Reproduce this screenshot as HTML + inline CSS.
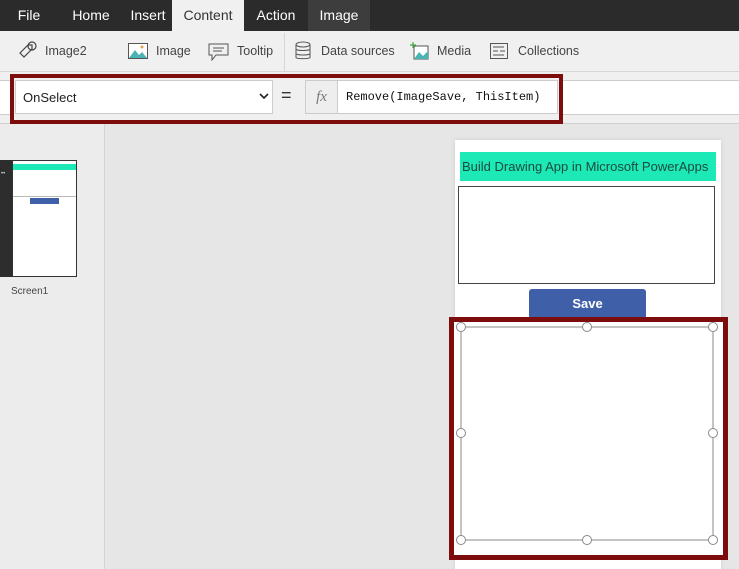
<!DOCTYPE html>
<html><head><meta charset="utf-8"><style>
*{margin:0;padding:0;box-sizing:border-box}
body{width:739px;height:569px;overflow:hidden;background:#e6e6e6;font-family:"Liberation Sans","DejaVu Sans",sans-serif;position:relative}
.abs{position:absolute}
.tab{position:absolute;top:0;height:31px;line-height:31px;font-size:14px;color:#fff;text-align:center}
.rb{position:absolute;top:44px;font-size:12.5px;color:#444}
</style></head><body>
<div class="abs" style="left:0;top:0;width:739px;height:31px;background:#2b2b2b"></div>
<div class="tab" style="left:0;width:58px">File</div>
<div class="tab" style="left:58px;width:66px">Home</div>
<div class="tab" style="left:124px;width:48px">Insert</div>
<div class="tab" style="left:172px;width:72px;background:#f0f0f0;color:#333">Content</div>
<div class="tab" style="left:244px;width:64px">Action</div>
<div class="tab" style="left:308px;width:62px;background:#3d3d3d">Image</div>
<div class="abs" style="left:0;top:31px;width:739px;height:41px;background:#f0f0f0;border-bottom:1px solid #d6d6d6"></div>
<div class="abs" style="left:284px;top:33px;width:1px;height:38px;background:#d6d6d6"></div>
<svg class="abs" style="left:18px;top:40px" width="22" height="22" viewBox="0 0 22 22" fill="none" stroke="#444" stroke-width="1.2"><path d="M2 13 L10 5 L14 5 L14 9 L6 17 Z"/><circle cx="14" cy="6" r="4"/></svg>
<div class="rb" style="left:45px">Image2</div>
<svg class="abs" style="left:128px;top:43px" width="20" height="16" viewBox="0 0 20 16"><rect x="0.5" y="0.5" width="19" height="15" fill="#fff" stroke="#555"/><path d="M1 15 L7 7 L11 12 L14 9 L19 15Z" fill="#4ab3b3"/><circle cx="14" cy="4" r="1.5" fill="#e8a050"/></svg>
<div class="rb" style="left:156px">Image</div>
<svg class="abs" style="left:208px;top:43px" width="22" height="18" viewBox="0 0 22 18" fill="none" stroke="#555"><path d="M1 1H20V12H8L4 17V12H1Z"/><path d="M5 5H16M5 8H14"/></svg>
<div class="rb" style="left:237px">Tooltip</div>
<svg class="abs" style="left:295px;top:41px" width="16" height="20" viewBox="0 0 16 20" fill="none" stroke="#555"><ellipse cx="8" cy="3.5" rx="7" ry="2.5"/><path d="M1 3.5V16.5C1 18 15 18 15 16.5V3.5M1 8c0 2 14 2 14 0M1 12.5c0 2 14 2 14 0"/></svg>
<div class="rb" style="left:321px">Data sources</div>
<svg class="abs" style="left:410px;top:42px" width="20" height="18" viewBox="0 0 20 18"><rect x="4" y="4" width="14" height="13" fill="#fff" stroke="#555"/><path d="M4 17L9 10L13 14L18 9V17Z" fill="#4ab3b3"/><path d="M3 0V6M0 3H6" stroke="#4a4" stroke-width="1.2"/></svg>
<div class="rb" style="left:437px">Media</div>
<svg class="abs" style="left:490px;top:43px" width="18" height="16" viewBox="0 0 18 16" fill="none" stroke="#555"><rect x="0.5" y="0.5" width="17" height="15"/><path d="M3 4H14M3 8H8M10 8H15M3 12H14"/></svg>
<div class="rb" style="left:518px">Collections</div>
<div class="abs" style="left:0;top:72px;width:739px;height:52px;background:#f0f0f0;border-bottom:1px solid #d0d0d0"></div>
<div class="abs" style="left:0;top:80px;width:739px;height:35px;background:#fff;border-top:1px solid #ccc;border-bottom:1px solid #ccc"></div>
<div class="abs" style="left:10px;top:74px;width:553px;height:50px;border:4px solid #7d0c0c;background:#f0f0f0"></div>
<div class="abs" style="left:15px;top:80px;width:258px;height:34px;background:#fff;border:1px solid #ccc;font-size:13px;line-height:33px;padding-left:7px;color:#222">OnSelect</div>
<svg class="abs" style="left:259px;top:93px" width="10" height="7" viewBox="0 0 10 7" fill="none" stroke="#222" stroke-width="1.6"><path d="M1 1L5 5L9 1"/></svg>
<div class="abs" style="left:281px;top:85px;font-size:18px;color:#333">=</div>
<div class="abs" style="left:305px;top:80px;width:33px;height:34px;background:#eee;border:1px solid #ccc;font-family:'Liberation Serif',serif;font-style:italic;font-size:15px;line-height:32px;text-align:center;color:#777">fx</div>
<div class="abs" style="left:338px;top:80px;width:220px;height:34px;background:#fff;border:1px solid #ccc;border-left:none;font-family:'Liberation Mono',monospace;font-size:12px;line-height:33px;padding-left:8px;color:#111">Remove(ImageSave, ThisItem)</div>
<div class="abs" style="left:0;top:124px;width:105px;height:445px;background:#ececec;border-right:1px solid #d4d4d4"></div>
<div class="abs" style="left:0;top:160px;width:12px;height:117px;background:#2d2d2d"></div>
<div class="abs" style="left:1px;top:171px;font-size:6px;color:#ccc">••</div>
<div class="abs" style="left:12px;top:160px;width:65px;height:117px;background:#fff;border:1px solid #333"></div>
<div class="abs" style="left:13px;top:164px;width:63px;height:6px;background:#1de9b6"></div>
<div class="abs" style="left:13px;top:196px;width:63px;height:1px;background:#bbb"></div>
<div class="abs" style="left:30px;top:198px;width:29px;height:6px;background:#3f5fa8"></div>
<div class="abs" style="left:11px;top:286px;font-size:10px;color:#444">Screen1</div>
<div class="abs" style="left:455px;top:140px;width:266px;height:429px;background:#fff;box-shadow:0 0 4px #ccc"></div>
<div class="abs" style="left:460px;top:152px;width:256px;height:29px;background:#1de9b6;font-size:13px;line-height:29px;padding-left:2px;color:#1a4a40">Build Drawing App in Microsoft PowerApps</div>
<div class="abs" style="left:458px;top:186px;width:257px;height:98px;border:1px solid #444"></div>
<div class="abs" style="left:529px;top:289px;width:117px;height:30px;background:#3f5fa8;border-radius:3px;color:#fff;font-weight:bold;font-size:13px;text-align:center;line-height:30px">Save</div>
<div class="abs" style="left:449px;top:317px;width:279px;height:243px;border:5px solid #7d0c0c;background:#fff"></div>
<svg class="abs" style="left:449px;top:317px" width="279" height="243"><g fill="#fff" stroke="#888"><rect x="12" y="10" width="252" height="213" fill="none"/><circle cx="12" cy="10" r="4.5"/><circle cx="138" cy="10" r="4.5"/><circle cx="264" cy="10" r="4.5"/><circle cx="12" cy="116" r="4.5"/><circle cx="264" cy="116" r="4.5"/><circle cx="12" cy="223" r="4.5"/><circle cx="138" cy="223" r="4.5"/><circle cx="264" cy="223" r="4.5"/></g></svg>
</body></html>
